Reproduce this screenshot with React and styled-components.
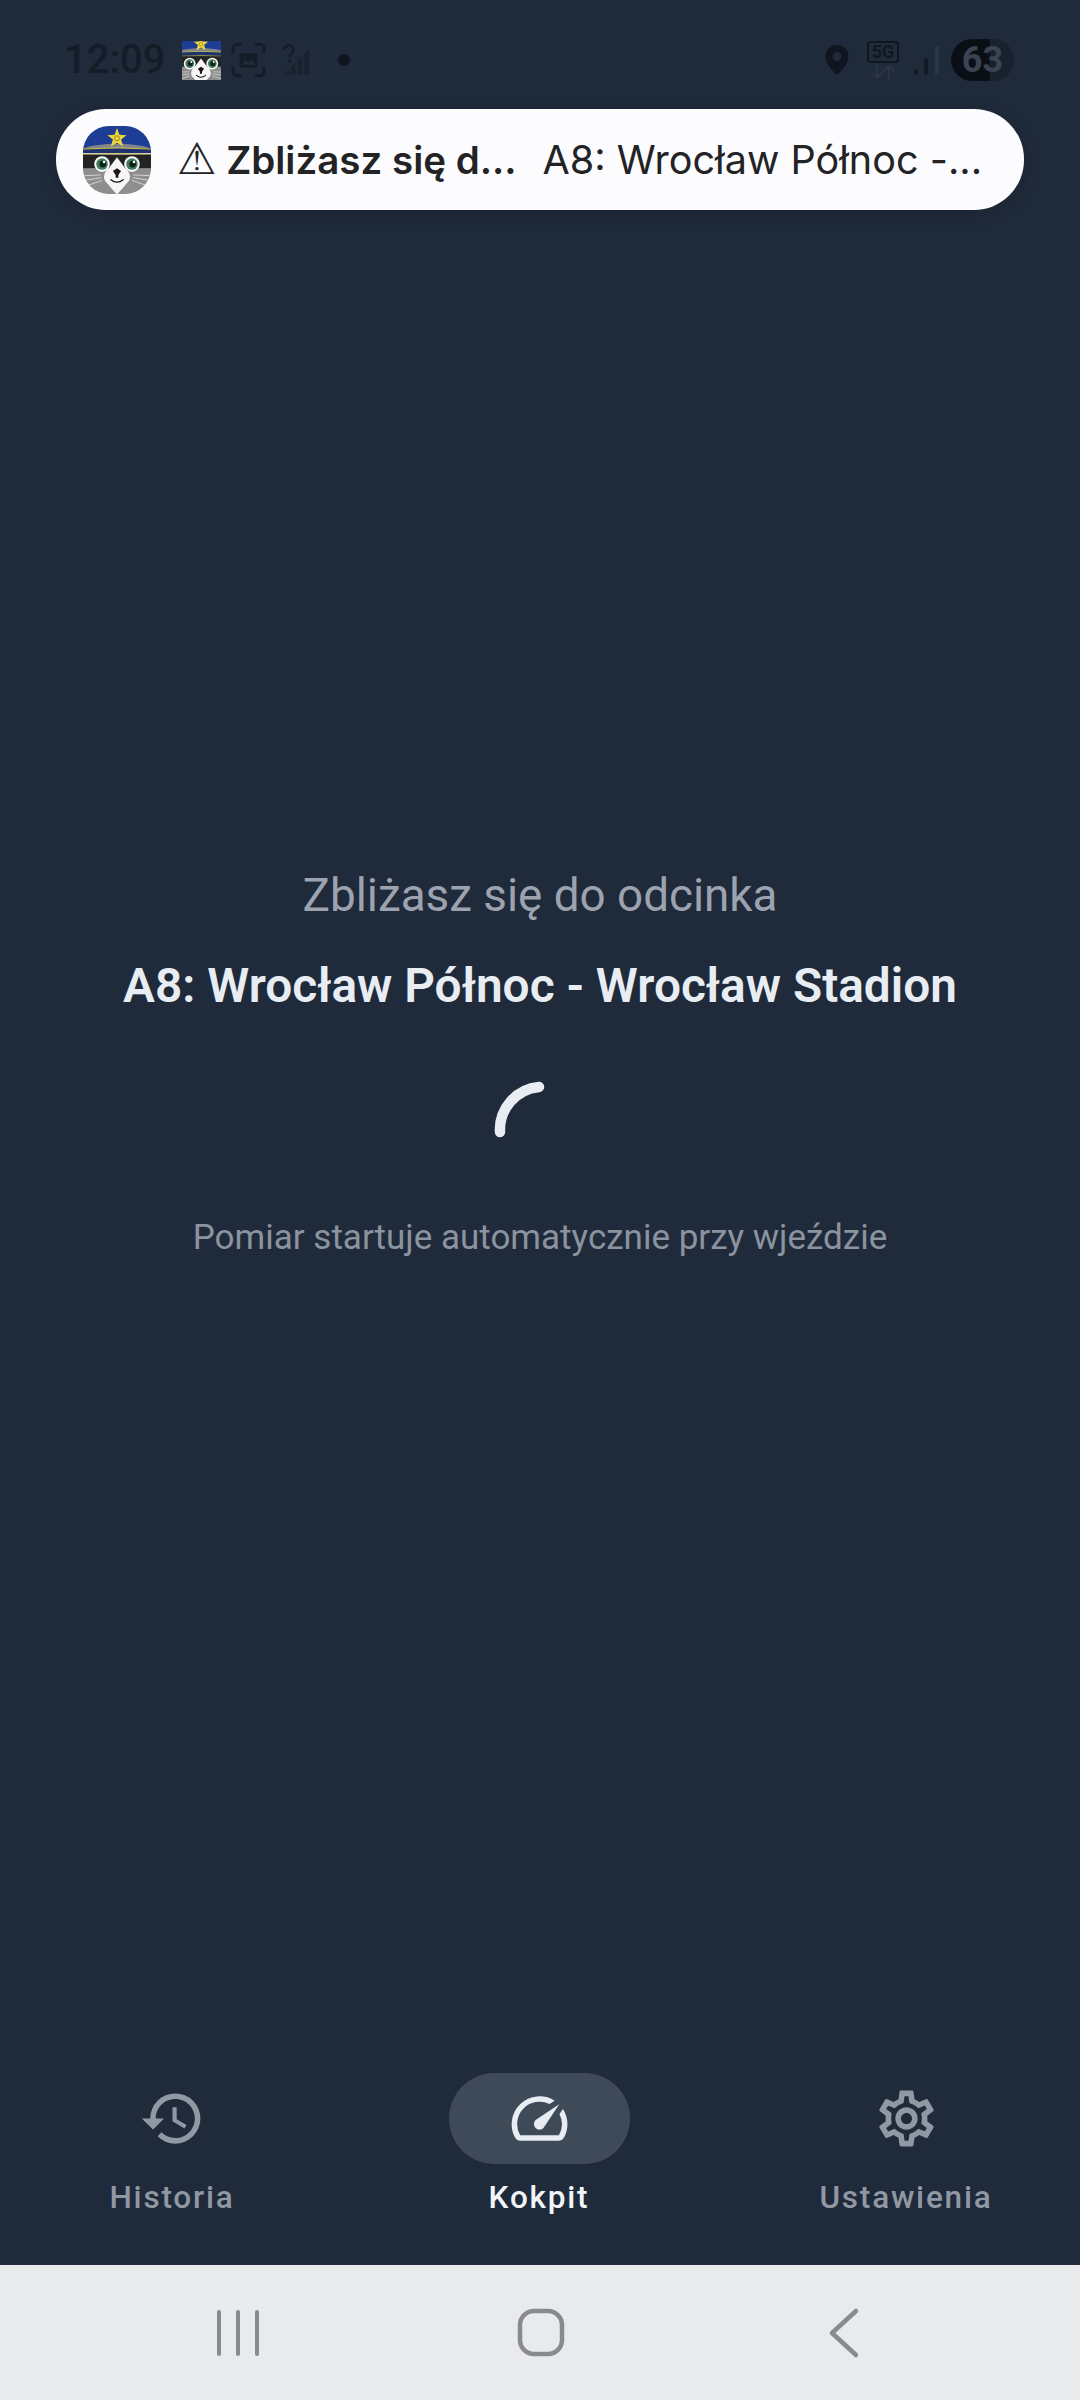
import { createGlobalStyle, styled } from "styled-components";
import { MdHistory, MdOutlineSettings, MdSpeed } from "react-icons/md";

const GlobalStyle = createGlobalStyle`
  html, body {
    margin: 0;
    padding: 0;
    background: #1f2a3a;
  }
  * {
    box-sizing: border-box;
  }
`;

const RaccoonLogo = ({ size, viewBox = "0 0 100 100", rounded }) => (
  <LogoSvg width={size} height={size} viewBox={viewBox} $rounded={rounded}>
    <rect x="0" y="0" width="100" height="36" fill="#1e3e96" />
    <path d="M0 33 C25 24 75 24 100 33 V38 H0 Z" fill="#80848c" />
    <rect x="0" y="33" width="100" height="7" fill="#1f3270" />
    <path d="M0 34 Q50 30 100 34" fill="none" stroke="#d8c63f" strokeWidth="1.400" />
    <path d="M0 42 Q50 39 100 42" fill="none" stroke="#d8c63f" strokeWidth="1.400" />
    <rect x="0" y="42" width="100" height="24" fill="#232323" />
    <rect x="0" y="62" width="100" height="38" fill="#8e8e8e" />
    <path d="M50 46 L62 62 Q72 70 68 80 L50 101 L32 80 Q28 70 38 62 Z" fill="#f6f6f6" />
    <path d="M2 73 L26 72 M2 80 L27 76 M5 88 L28 80 M98 73 L74 72 M98 80 L73 76 M95 88 L72 80" stroke="#d6d6d6" strokeWidth="1.400" />
    <circle cx="28" cy="56" r="11.500" fill="#fafafa" />
    <circle cx="72" cy="56" r="11.500" fill="#fafafa" />
    <circle cx="28" cy="56" r="8.500" fill="#3f7d5c" />
    <circle cx="72" cy="56" r="8.500" fill="#3f7d5c" />
    <circle cx="29" cy="56" r="5" fill="#10221a" />
    <circle cx="73" cy="56" r="5" fill="#10221a" />
    <circle cx="31" cy="53" r="1.800" fill="#fff" />
    <circle cx="75" cy="53" r="1.800" fill="#fff" />
    <path d="M44 66 L50 62 L56 66 L52 72 V76 H48 V72 Z" fill="#1c1416" />
    <path d="M41 79 Q50 86 59 79" fill="none" stroke="#1c1416" strokeWidth="2" strokeLinecap="round" />
    <path
      d="M50 3 L53.500 13 L64 13.500 L56 20 L59 30 L50 24.500 L41 30 L44 20 L36 13.500 L46.500 13 Z"
      fill="#efd73a"
    />
    <circle cx="50" cy="18" r="3.600" fill="none" stroke="#8a7a20" strokeWidth="1.200" />
  </LogoSvg>
);

const navItems = [
  { label: "Historia", Icon: MdHistory },
  { label: "Kokpit", Icon: MdSpeed, active: true },
  { label: "Ustawienia", Icon: MdOutlineSettings },
];

const App = () => {
  return (
    <Page>
      <GlobalStyle />
      <StatusBar>
        <StatusGroup>
          <Clock>12:09</Clock>
          <RaccoonLogo size={39} viewBox="13 12 76 76" />
          <ScreenshotIcon width="35" height="36" viewBox="0 0 36 36" fill="none">
            <path
              d="M10 2H6a4 4 0 0 0-4 4v4M26 2h4a4 4 0 0 1 4 4v4M10 34H6a4 4 0 0 1-4-4v-4M26 34h4a4 4 0 0 0 4-4v-4"
              stroke="#141c27"
              strokeWidth="3"
              strokeLinecap="round"
            />
            <rect x="9" y="11" width="18" height="15" rx="2" fill="#141c27" />
            <path d="M11 23l4-5 3 3 3-4 4 6z" fill="#1f2a3a" />
          </ScreenshotIcon>
          <svg width="27" height="32" viewBox="0 0 28 32">
            <path d="M1 6a5 5 0 0 1 10 0c0 3-4 3-4 7" fill="none" stroke="#141c27" strokeWidth="2.600" />
            <circle cx="7" cy="17" r="1.800" fill="#141c27" />
            <path d="M1 31L6 26V31ZM8 31V24L13 19V31ZM15 31V17L20 12V31ZM22 31V10L27 5V31Z" fill="#141c27" opacity="0.6" />
          </svg>
          <Dot />
        </StatusGroup>
        <StatusGroup>
          <PinIcon width="24" height="30" viewBox="0 0 24 30" fill="#0f161f">
            <path
              fillRule="evenodd"
              d="M12 0a11.5 11.5 0 0 1 11.5 11.5C23.500 20 12 30 12 30S.5 20 .5 11.500A11.500 11.500 0 0 1 12 0Zm0 7a4.500 4.500 0 1 0 0 9 4.500 4.500 0 0 0 0-9Z"
            />
          </PinIcon>
          <NetworkBadge>
            <NetworkLabel>5G</NetworkLabel>
            <svg width="26" height="14" viewBox="0 0 26 14" fill="none" stroke="#2b3645" strokeWidth="2.200">
              <path d="M7 0V12M2 8l5 5 5-5M19 14V2M14 6l5-5 5 5" />
            </svg>
          </NetworkBadge>
          <svg width="27" height="30" viewBox="0 0 27 30">
            <rect x="1" y="24" width="4" height="6" rx="2" fill="#121a24" />
            <rect x="11" y="13" width="4" height="17" rx="1" fill="#121a24" />
            <rect x="22" y="1" width="4" height="29" rx="1" fill="#2b3645" />
          </svg>
          <Battery>63</Battery>
        </StatusGroup>
      </StatusBar>

      <Banner>
        <RaccoonLogo size={68} rounded />
        <BannerTitle>
          <WarningGlyph>⚠</WarningGlyph> Zbliżasz się d...
        </BannerTitle>
        <BannerBody>A8: Wrocław Północ -...</BannerBody>
      </Banner>

      <Main>
        <Subtitle>Zbliżasz się do odcinka</Subtitle>
        <SegmentName>A8: Wrocław Północ - Wrocław Stadion</SegmentName>
        <Spinner width="100" height="100" viewBox="0 0 100 100" fill="none">
          <path d="M49 7 A43 43 0 0 0 10 52" stroke="#e8edf3" strokeWidth="10.500" strokeLinecap="round" />
        </Spinner>
        <Hint>Pomiar startuje automatycznie przy wjeździe</Hint>
      </Main>

      <BottomNav>
        {navItems.map(({ label, Icon, active }) => (
          <NavItem key={label} $active={active}>
            <IconPill $active={active}>
              <Icon size={67} />
            </IconPill>
            <NavLabel $active={active}>{label}</NavLabel>
          </NavItem>
        ))}
      </BottomNav>

      <SystemBar>
        <svg width="60" height="60" viewBox="0 0 60 60" stroke="#888a8c" strokeWidth="4" strokeLinecap="round">
          <path d="M12 9V51M31 9V51M50 9V51" />
        </svg>
        <svg width="60" height="60" viewBox="0 0 60 60" fill="none">
          <rect x="10" y="8" width="42" height="43" rx="14" stroke="#888a8c" strokeWidth="4.500" />
        </svg>
        <svg width="60" height="60" viewBox="0 0 60 60" fill="none">
          <path d="M43 8 L19 30 L43 52" stroke="#888a8c" strokeWidth="4.500" strokeLinecap="round" strokeLinejoin="round" />
        </svg>
      </SystemBar>
    </Page>
  );
};

const Page = styled.div`
  width: 1080px;
  height: 2400px;
  display: flex;
  flex-direction: column;
  overflow: hidden;
  background: #1f2a3a;
  font-family: Roboto, "Noto Sans", sans-serif;
`;

const StatusBar = styled.div`
  height: 109px;
  padding: 39px 66px 28px 64px;
  display: flex;
  justify-content: space-between;
  align-items: center;
`;

const StatusGroup = styled.div`
  display: flex;
  align-items: center;
  gap: 14px;
`;

const Clock = styled.span`
  margin-right: 3px;
  font-size: 40px;
  font-weight: 500;
  line-height: 42px;
  color: #141c27;
`;

const ScreenshotIcon = styled.svg`
  margin: 0 3px 0 -4px;
`;

const PinIcon = styled.svg`
  margin-right: 4px;
`;

const Dot = styled.span`
  width: 12px;
  height: 12px;
  margin-left: 14px;
  border-radius: 50%;
  background: #0f161f;
`;

const NetworkBadge = styled.div`
  display: flex;
  flex-direction: column;
  align-items: center;
  gap: 2px;
`;

const NetworkLabel = styled.span`
  width: 32px;
  height: 22px;
  border: 2px solid #10171f;
  border-radius: 3px;
  font-size: 18px;
  font-weight: 700;
  line-height: 18px;
  text-align: center;
  color: #10171f;
`;

const Battery = styled.div`
  width: 63px;
  height: 42px;
  margin-left: -3px;
  border-radius: 21px;
  background: linear-gradient(to right, #0a0f15 62%, #18212d 62%);
  font-size: 36px;
  font-weight: 700;
  line-height: 42px;
  text-align: center;
  color: #3a4453;
`;

const Banner = styled.div`
  width: 968px;
  height: 101px;
  margin-left: 56px;
  padding-left: 27px;
  display: flex;
  align-items: center;
  border-radius: 50px;
  background: #fcfcfe;
  box-shadow: 0 4px 18px rgba(0, 0, 0, 0.12);
  white-space: nowrap;
  color: #232326;
`;

const LogoSvg = styled.svg`
  flex-shrink: 0;
  border-radius: ${({ $rounded }) => ($rounded ? "38%" : "0")};
`;

const BannerTitle = styled.span`
  margin-left: 26px;
  font-family: Inter, Roboto, sans-serif;
  font-size: 38.500px;
  font-weight: 600;
`;

const WarningGlyph = styled.span`
  font-family: "DejaVu Sans", sans-serif;
  font-size: 44px;
  font-weight: 400;
  line-height: 1;
`;

const BannerBody = styled.span`
  margin-left: 26px;
  font-family: Inter, Roboto, sans-serif;
  font-size: 39.600px;
  font-weight: 400;
`;

const Main = styled.main`
  flex: 1;
  padding-top: 654px;
  display: flex;
  flex-direction: column;
  align-items: center;
`;

const Subtitle = styled.p`
  margin: 0;
  font-size: 45.800px;
  line-height: 64px;
  color: #9ca3af;
`;

const SegmentName = styled.h1`
  margin: 26px 0 0;
  font-size: 47.800px;
  font-weight: 600;
  line-height: 64px;
  color: #e8edf3;
`;

const Spinner = styled.svg`
  margin-top: 62px;
`;

const Hint = styled.p`
  margin: 34px 0 0;
  font-size: 35px;
  line-height: 48px;
  color: #8b939f;
`;

const BottomNav = styled.nav`
  height: 205px;
  padding-right: 2px;
  display: flex;
  justify-content: space-between;
`;

const NavItem = styled.div`
  width: 344px;
  display: flex;
  flex-direction: column;
  align-items: center;
  color: ${({ $active }) => ($active ? "#e8edf3" : "#8f98a3")};
`;

const IconPill = styled.div`
  width: 181px;
  height: 91px;
  margin-top: 13px;
  display: flex;
  align-items: center;
  justify-content: center;
  border-radius: 46px;
  background: ${({ $active }) => ($active ? "#3f4a59" : "transparent")};
`;

const NavLabel = styled.span`
  margin-top: 12px;
  font-size: 31.500px;
  font-weight: 500;
  line-height: 44px;
  letter-spacing: 1.800px;
  color: ${({ $active }) => ($active ? "#f1f4f8" : "#8f98a3")};
`;

const SystemBar = styled.div`
  height: 135px;
  display: flex;
  align-items: center;
  justify-content: center;
  gap: 243px;
  background: #e9eaec;
`;

export default App;
